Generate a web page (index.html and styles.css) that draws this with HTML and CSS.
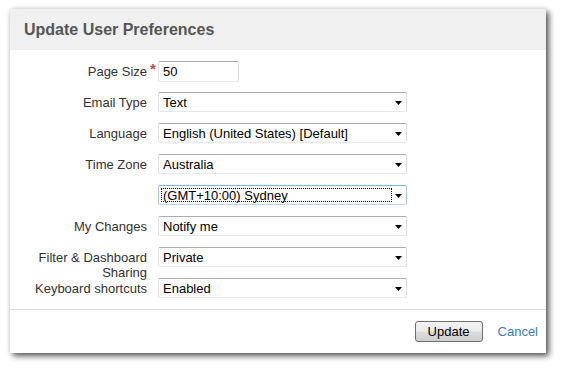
FILE: index.html
```html
<!DOCTYPE html>
<html>
<head>
  <title>Update User Preferences</title>
  <meta name="viewport" content="width=device-width,initial-scale=1">
  <link rel="stylesheet" href="styles.css">
</head>
<body>
  <div class="page">
    <div class="dialog">
      <h2 class="dialog-title">Update User Preferences</h2>

      <form class="prefs">
        <div class="field">
          <label class="field-label">Page Size<span class="req">*</span></label>
          <input class="text" type="text" value="50">
        </div>
        <div class="field">
          <label class="field-label">Email Type</label>
          <div class="select"><select><option>Text</option><option>HTML</option></select></div>
        </div>
        <div class="field">
          <label class="field-label">Language</label>
          <div class="select"><select><option>English (United States) [Default]</option></select></div>
        </div>
        <div class="field">
          <label class="field-label">Time Zone</label>
          <div class="select"><select><option>Australia</option></select></div>
        </div>
        <div class="field">
          <label class="field-label"></label>
          <div class="select focused"><select><option>(GMT+10:00) Sydney</option></select></div>
        </div>
        <div class="field">
          <label class="field-label">My Changes</label>
          <div class="select"><select><option>Notify me</option></select></div>
        </div>
        <div class="field">
          <label class="field-label">Filter &amp; Dashboard Sharing</label>
          <div class="select"><select><option>Private</option><option>Public</option></select></div>
        </div>
        <div class="field">
          <label class="field-label">Keyboard shortcuts</label>
          <div class="select"><select><option>Enabled</option><option>Disabled</option></select></div>
        </div>
      </form>

      <div class="dialog-footer">
        <button class="button" type="button">Update</button>
        <a class="cancel" href="#">Cancel</a>
      </div>
    </div>
  </div>
</body>
</html>
```

FILE: styles.css
```css
html,
body {
  margin: 0;
  background: #fff;
  font-family: 'Liberation Sans', Arial, sans-serif;
  font-size: 13px;
  color: #333;
}

.page {
  padding: 9px 0 20px 10px;
}

.dialog {
  width: 536px;
  background: #fff;
  box-shadow: 3px 3px 6px rgba(0, 0, 0, 0.65), 0 0 4px rgba(0, 0, 0, 0.12);
}

.dialog-title {
  margin: 0;
  height: 41px;
  padding-left: 14px;

  background: #f0f0f0;
  font-size: 16px;
  font-weight: bold;
  line-height: 41px;
  color: #555;
}

.prefs {
  margin: 0;
  padding: 11px 0 11px 0;
  border-bottom: 1px solid #dcdcdc;
}

.field {
  display: flex;
  gap: 11px;
  height: 20px;
  margin-bottom: 11px;
}

.field:first-child {
  height: 21px;
  margin-bottom: 10px;
}

.field:last-child {
  margin-bottom: 0;
}

.field-label {
  position: relative;
  flex: 0 0 137px;
  padding-top: 3px;

  text-align: right;
  line-height: 15px;
  color: #333;
}

.req {
  position: absolute;
  top: 0;
  left: 140px;

  font-size: 15px;
  font-weight: bold;
  color: #b94a48;
}

.text,
.select select {
  box-sizing: border-box;
  margin: 0;
  border: 1px solid;
  border-color: #abadb3 #dbdfe6 #e3e9ef #e2e3ea;
  border-radius: 2px;
  background: #fff;
  font-family: inherit;
  font-size: 13px;
  color: #000;
}

.text {
  width: 81px;
  height: 21px;
  padding: 0 4px;
}

.select {
  position: relative;
  width: 249px;
  height: 20px;
}

.select select {
  width: 100%;
  height: 20px;
  padding: 1px 0 0 4px;
  appearance: none;
  -webkit-appearance: none;
  outline: none;
}

.select:after {
  content: '';
  position: absolute;
  right: 5px;
  top: 9px;
  width: 7px;
  height: 4px;

  background: #000;
  clip-path: polygon(0 0, 100% 0, 50% 100%);
  pointer-events: none;
}

.select.focused select {
  border-color: #7eb4ea #a5c9ed #b9d5f1 #a5c9ed;
}

.select.focused:before {
  content: '';
  position: absolute;
  left: 3px;
  top: 3px;
  width: 229px;
  height: 12px;

  border: 1px dotted #000;
  pointer-events: none;
}

.dialog-footer {
  display: flex;
  justify-content: flex-end;
  align-items: center;
  gap: 15px;
  height: 43px;
  padding-right: 8px;
}

.button {
  width: 68px;
  height: 21px;
  padding: 0;

  border: 1px solid #707070;
  border-radius: 3px;
  background: linear-gradient(to bottom, #f2f2f2 0%, #ebebeb 49%, #dddddd 51%, #cfcfcf 100%);
  font-family: inherit;
  font-size: 13px;
  font-weight: normal;
  color: #000;
}

.cancel {
  font-size: 13px;
  color: #3b7dc4;
  text-decoration: none;
}
```
